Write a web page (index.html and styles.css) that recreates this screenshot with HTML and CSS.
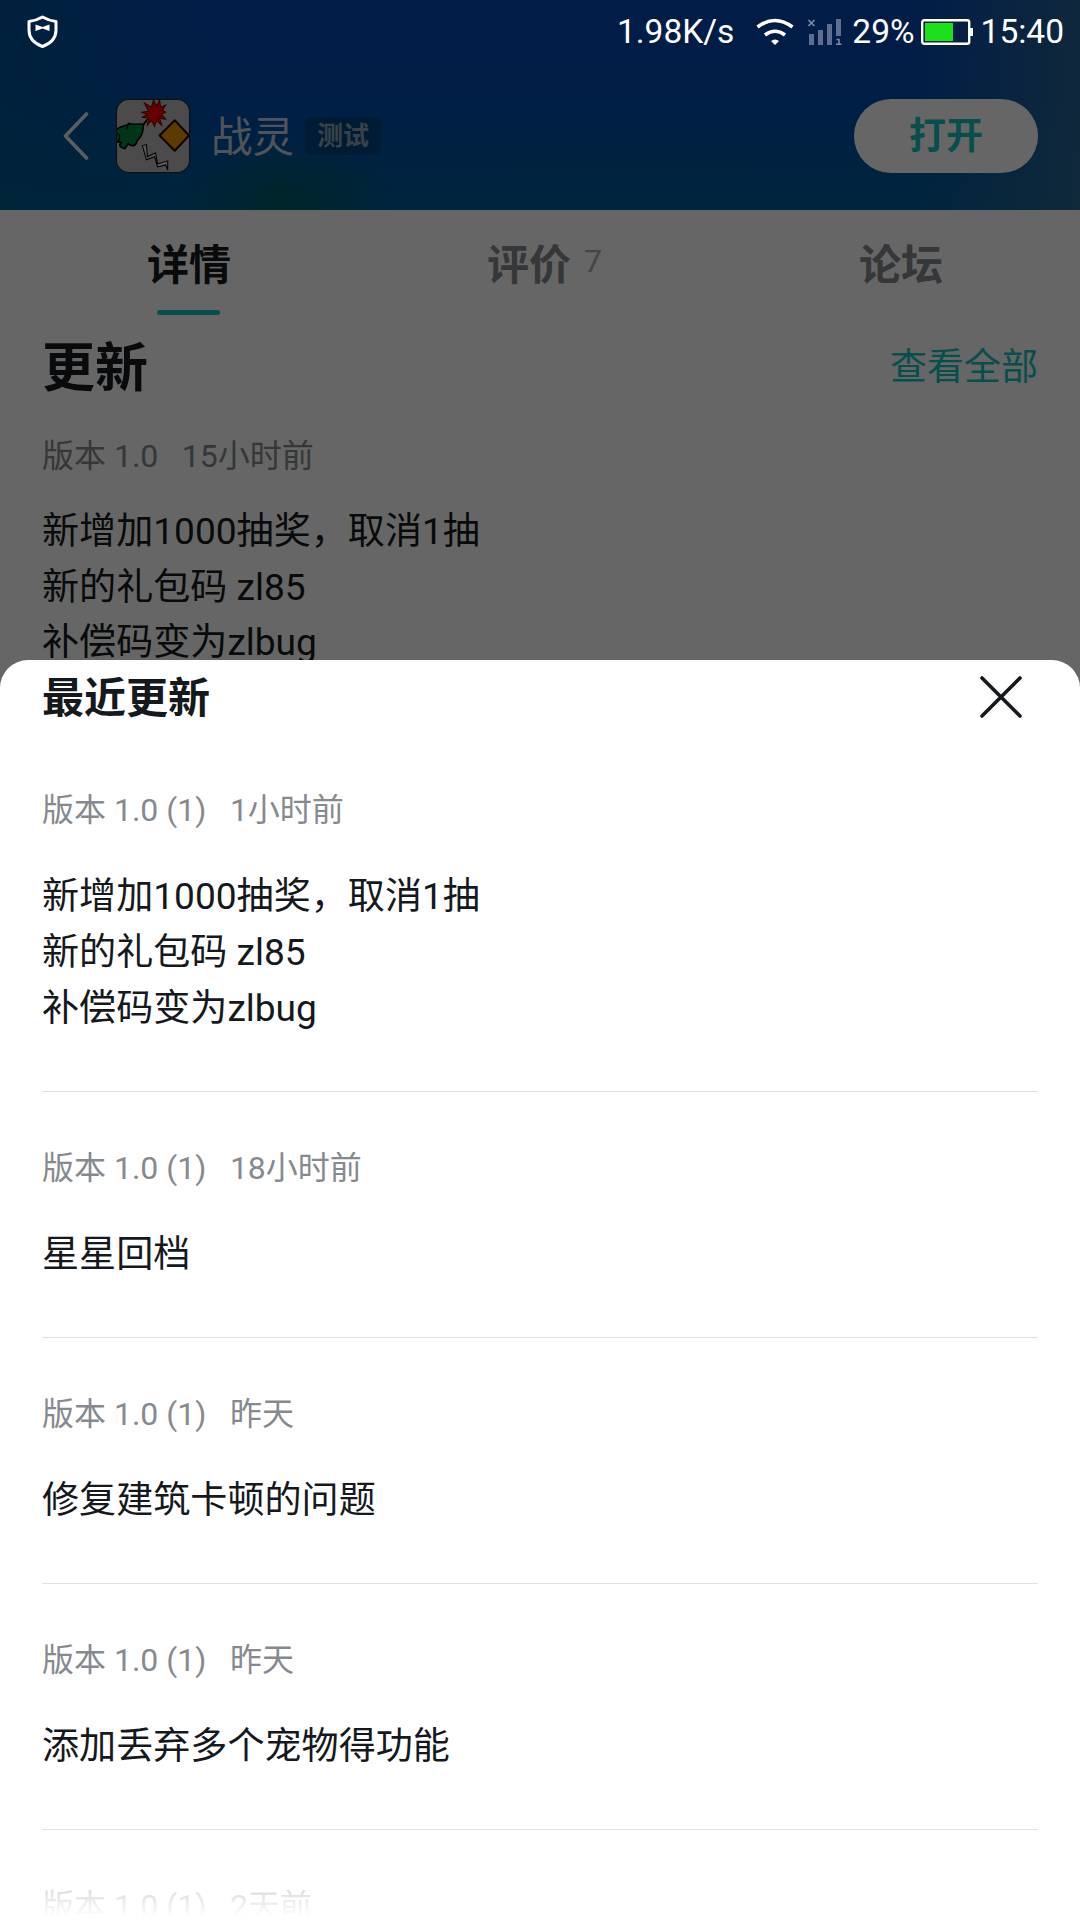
FILE: index.html
```html
<!DOCTYPE html>
<html lang="zh-CN">
	<head>
		<meta charset="UTF-8" />
		<meta name="viewport" content="width=device-width, initial-scale=1.0" />
		<title>战灵</title>
		<link rel="stylesheet" href="styles.css">
	</head>

	<body>
		<header class="header">
			<!--system status bar, stays bright above the dimmed page-->
			<div class="status">
				<svg class="status__shield" viewBox="0 0 32 34" aria-hidden="true">
					<path d="M16 2 Q22 5.500 29.500 6.500 V15 C29.500 24 23 29 16 31.500 C9 29 2.500 24 2.500 15 V6.500 Q10 5.500 16 2 Z" fill="none" stroke="#fff" stroke-width="3" stroke-linejoin="round" />
					<path d="M9 9.500 L16 12 L23 9.500 V16 L16 13.500 L9 16 Z" fill="#fff" />
				</svg>
				<span class="status__speed">1.98K/s</span>
				<svg class="status__wifi" viewBox="0 0 38 28" aria-hidden="true">
					<path d="M1.500 9 Q19 -4 36.500 9 M9 17 Q19 9.500 29 17" fill="none" stroke="#fff" stroke-width="3.600" />
					<path d="M15 23 Q19 20 23 23 L19 27 Z" fill="#fff" />
				</svg>
				<svg class="status__signal" viewBox="0 0 34 28" aria-hidden="true">
					<path d="M1 16 H6 V27 H1 Z M10 12 H15 V27 H10 Z M19 6 H24 V27 H19 Z M28 1 H33 V18 H28 Z" fill="#5d6e8e" />
					<path d="M0.500 2 L6.500 8 M6.500 2 L0.500 8 M28.500 21.500 H31 V26 M28 26.200 H33.500" fill="none" stroke="#7c8ba6" stroke-width="1.600" />
				</svg>
				<span class="status__percent">29%</span>
				<svg class="status__battery" viewBox="0 0 52 26" aria-hidden="true">
					<rect x="1.200" y="1.200" width="47" height="23.600" rx="2" fill="none" stroke="#fff" stroke-width="2.400" />
					<rect x="4" y="4" width="28" height="18" fill="#1be01b" />
					<rect x="49" y="9" width="3" height="8" fill="#fff" />
				</svg>
				<span class="status__time">15:40</span>
			</div>

			<div class="appbar">
				<svg class="appbar__back" viewBox="0 0 26 50" aria-hidden="true">
					<path d="M23.500 3 L2.500 25 L23.500 47" fill="none" stroke="#e4e8ee" stroke-width="3.600" stroke-linecap="round" stroke-linejoin="round" />
				</svg>
				<svg class="appbar__icon" viewBox="0 0 73 73" aria-hidden="true">
					<clipPath id="icon"><rect x="0.500" y="0.500" width="72" height="72" rx="12" /></clipPath>
					<g clip-path="url(#icon)">
						<rect width="73" height="73" fill="#bbb" />
						<path d="M37 1 L40 7 L43 1 L44 8 L49 6 L46 11 L49 13 L45 15 L49 20 L43 19 L45 26 L40 21 L38 27 L35 21 L31 26 L32 19 L26 18 L31 15 L25 13 L32 12 L28 4 L35 8 Z" fill="#f00" stroke="#700" />
						<path d="M31 20 L27 25 C21 24 16 26 13 24 C10 28 4 25 0 31 V42 L5 43 C2 46 5 48 9 49 L12 44 C16 48 20 46 21 41 C26 37 27 32 27 26 Z" fill="#00883a" stroke="#000" stroke-width="1.500" />
						<path d="M13 24 L10 30 M0 34 C4 34 5 38 2 42" fill="none" stroke="#000" />
						<path d="M58 21 L72 36 L58 51 L43 36 Z" fill="#e69500" stroke="#300" stroke-width="2" stroke-linejoin="round" />
						<path d="M26 46 L30 45 L31 57 L39 53 L41 64 L51 61 L51 70 L49 65 L41 67 L38 57 L30 60 Z" fill="#ddd" stroke="#000" />
					</g>
					<rect x="0.500" y="0.500" width="72" height="72" rx="12" fill="none" stroke="#222" />
				</svg>
				<h1 class="appbar__name">战灵</h1>
				<span class="appbar__badge">测试</span>
				<button class="appbar__open">打开</button>
			</div>
		</header>

		<main class="page">
			<nav class="tabs">
				<a class="tabs__item tabs__item--active">详情</a>
				<a class="tabs__item">评价<span class="tabs__count">7</span></a>
				<a class="tabs__item">论坛</a>
			</nav>
			<div class="section">
				<h2 class="section__title">更新</h2>
				<a class="section__more">查看全部</a>
			</div>
			<p class="meta"><span>版本 1.0</span><span>15小时前</span></p>
			<p class="text text--page">新增加1000抽奖，取消1抽<br />新的礼包码 zl85<br />补偿码变为zlbug</p>
		</main>

		<div class="mask"></div>

		<!--bottom sheet-->
		<section class="sheet">
			<div class="sheet__head">
				<h2 class="sheet__title">最近更新</h2>
				<svg class="sheet__close" viewBox="0 0 44 44" aria-hidden="true">
					<path d="M3 3 L41 41 M41 3 L3 41" fill="none" stroke="#15191d" stroke-width="3.600" stroke-linecap="round" />
				</svg>
			</div>
			<article class="log">
				<p class="meta"><span>版本 1.0 (1)</span><span>1小时前</span></p>
				<p class="text">新增加1000抽奖，取消1抽<br />新的礼包码 zl85<br />补偿码变为zlbug</p>
			</article>
			<article class="log">
				<p class="meta"><span>版本 1.0 (1)</span><span>18小时前</span></p>
				<p class="text">星星回档</p>
			</article>
			<article class="log">
				<p class="meta"><span>版本 1.0 (1)</span><span>昨天</span></p>
				<p class="text">修复建筑卡顿的问题</p>
			</article>
			<article class="log">
				<p class="meta"><span>版本 1.0 (1)</span><span>昨天</span></p>
				<p class="text">添加丢弃多个宠物得功能</p>
			</article>
			<article class="log">
				<p class="meta"><span>版本 1.0 (1)</span><span>2天前</span></p>
			</article>
			<div class="sheet__fade"></div>
		</section>
	</body>
</html>
```

FILE: styles.css
```css
:root {
	--teal: #14c4c0;
	--ink: #15191d;
	--gray: #868a8e;
}
* {
	box-sizing: border-box;
	margin: 0;
	padding: 0;
}
body {
	position: relative;
	width: 1080px;
	height: 1920px;
	overflow: hidden;
	background: #fff;
	color: var(--ink);
	font-family: Roboto, "Noto Sans CJK SC", sans-serif;
}
.header {
	height: 210px;
	background:
		radial-gradient(ellipse 110px 60px at 285px 200px, rgba(0, 92, 90, 0.8), transparent),
		linear-gradient(to right, rgba(0, 90, 130, 0.55), transparent 20%, transparent 84%, rgba(50, 105, 145, 0.8)),
		linear-gradient(#0049b4, #004ab0 40%, #005c98);
}
.status {
	position: relative;
	z-index: 2; /*above the mask*/
	display: flex;
	align-items: center;
	height: 63px;
	padding: 0 16px 0 26px;
	color: #fff;
	font-size: 33.5px;
}
.status__shield {
	width: 33px;
	height: 34px;
	margin-right: auto;
}
.status__wifi {
	width: 38px;
	height: 28px;
	margin-left: 22px;
}
.status__signal {
	width: 34px;
	height: 28px;
	margin-left: 14px;
}
.status__percent {
	margin-left: 10px;
}
.status__battery {
	width: 52px;
	height: 26px;
	margin-left: 6px;
}
.status__time {
	margin-left: 8px;
}
.appbar {
	display: flex;
	align-items: center;
	height: 74px;
	margin-top: 36px;
	padding: 0 42px 0 63px;
}
.appbar__back {
	width: 26px;
	height: 50px;
}
.appbar__icon {
	width: 74px;
	height: 74px;
	margin-left: 27px;
}
.appbar__name {
	margin-left: 21px;
	padding-bottom: 4px;
	color: #c8d2de;
	font-size: 41.5px;
	font-weight: 400;
}
.appbar__badge {
	height: 38px;
	margin-left: 11px;
	padding: 0 12px;
	border-radius: 8px;
	background: rgba(0, 60, 105, 0.6);
	color: #8fa2b4;
	font-size: 26px;
	font-weight: 700;
	line-height: 38px;
}
.appbar__open {
	width: 184px;
	height: 74px;
	margin-left: auto;
	padding-bottom: 7px;
	border: 0;
	border-radius: 37px;
	background: #fff;
	color: var(--teal);
	font: inherit;
	font-size: 37px;
	font-weight: 700;
}
.tabs {
	display: grid;
	grid-template-columns: 378px 333px 380px;
	height: 105px;
}
.tabs__item {
	display: flex;
	justify-content: center;
	align-items: center;
	position: relative;
	padding-bottom: 3px;
	color: #868a8e;
	font-size: 42px;
	font-weight: 700;
}
.tabs__item--active {
	color: var(--ink);
}
.tabs__item--active::after {
	content: '';
	position: absolute;
	bottom: 0;
	left: 157px;
	width: 63px;
	height: 5px;
	border-radius: 3px;
	background: var(--teal);
}
.tabs__count {
	margin-left: 13px;
	color: #a8adb2;
	font-size: 32px;
	font-weight: 400;
}
.section {
	display: flex;
	justify-content: space-between;
	align-items: center;
	height: 102px;
	padding: 0 42px 4px;
}
.section__title {
	font-size: 53px;
}
.section__more {
	color: var(--teal);
	font-size: 37px;
}
.page > .meta {
	margin: 17px 42px 0;
}
.meta {
	display: flex;
	gap: 23.5px;
	color: var(--gray);
	font-size: 32px;
	line-height: 44px;
}
.text {
	margin-top: 37px;
	font-size: 37.1px;
	line-height: 56px;
}
.text--page {
	margin: 26px 42px 0;
	line-height: 55.5px;
}
.mask {
	position: absolute;
	inset: 0;
	z-index: 1;
	background: rgba(0, 0, 0, 0.6);
}
.sheet {
	position: absolute;
	inset: 660px 0 0;
	z-index: 3;
	overflow: hidden;
	padding: 0 42px;
	border-radius: 28px 28px 0 0;
	background: #fff;
}
.sheet__head {
	display: flex;
	justify-content: space-between;
	align-items: center;
	height: 74px;
}
.sheet__title {
	padding-bottom: 5px;
	font-size: 42px;
}
.sheet__close {
	width: 44px;
	height: 44px;
	margin-right: 15px;
}
.log {
	padding: 54px 0;
	border-bottom: 1px solid #dfe1e3;
}
/*the list fades out at the bottom edge*/
.sheet__fade {
	position: absolute;
	inset: auto 0 0;
	height: 60px;
	background: linear-gradient(rgba(255, 255, 255, 0.4), #fff 95%);
}
```
